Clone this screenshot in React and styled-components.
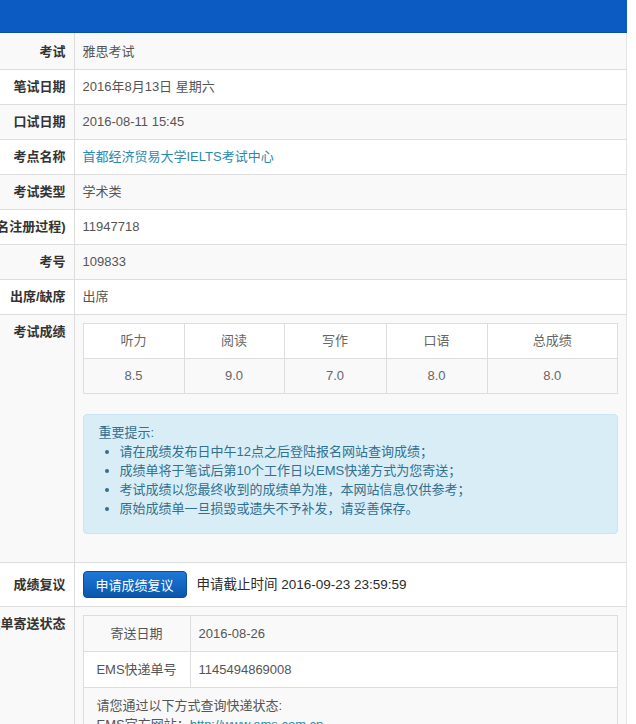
import React from "react";
import styled, { createGlobalStyle } from "styled-components";

const rows = [
	{ label: "考试", value: "雅思考试" },
	{ label: "笔试日期", value: "2016年8月13日 星期六" },
	{ label: "口试日期", value: "2016-08-11 15:45" },
	{ label: "考点名称", value: "首都经济贸易大学IELTS考试中心", link: true },
	{ label: "考试类型", value: "学术类" },
	{ label: "考生号(报名注册过程)", value: "11947718" },
	{ label: "考号", value: "109833" },
	{ label: "出席/缺席", value: "出席" }
];

const scores = [
	{ name: "听力", score: "8.5", width: 101 },
	{ name: "阅读", score: "9.0", width: 100 },
	{ name: "写作", score: "7.0", width: 102 },
	{ name: "口语", score: "8.0", width: 101 },
	{ name: "总成绩", score: "8.0" }
];

const tips = [
	"请在成绩发布日中午12点之后登陆报名网站查询成绩；",
	"成绩单将于笔试后第10个工作日以EMS快递方式为您寄送；",
	"考试成绩以您最终收到的成绩单为准，本网站信息仅供参考；",
	"原始成绩单一旦损毁或遗失不予补发，请妥善保存。"
];

const App = () => {
	return (
		<>
			<GlobalStyle />
			<Panel>
				<PanelHeading />
				<InfoTable>
					<colgroup>
						<col style={{ width: 74 }} />
						<col />
					</colgroup>
					<tbody>
						{rows.map(row => (
							<tr key={row.label}>
								<Label>
									<LabelText>{row.label}</LabelText>
								</Label>
								<Value>{row.link ? <Link href="#">{row.value}</Link> : row.value}</Value>
							</tr>
						))}
						<tr>
							<Label>
								<LabelText>考试成绩</LabelText>
							</Label>
							<Value>
								<ScoreTable>
									<colgroup>
										{scores.map(s => (
											<col key={s.name} style={s.width ? { width: s.width } : undefined} />
										))}
									</colgroup>
									<thead>
										<tr>
											{scores.map(s => (
												<ScoreHead key={s.name}>{s.name}</ScoreHead>
											))}
										</tr>
									</thead>
									<tbody>
										<ScoreRow>
											{scores.map(s => (
												<ScoreCell key={s.name}>{s.score}</ScoreCell>
											))}
										</ScoreRow>
									</tbody>
								</ScoreTable>
								<Alert>
									<AlertTitle>重要提示:</AlertTitle>
									<TipList>
										{tips.map(t => (
											<li key={t}>{t}</li>
										))}
									</TipList>
								</Alert>
							</Value>
						</tr>
						<tr>
							<Label $middle>
								<LabelText>成绩复议</LabelText>
							</Label>
							<Value>
								<ReviewLine>
									<Button type="button">申请成绩复议</Button>
									<Deadline>申请截止时间 2016-09-23 23:59:59</Deadline>
								</ReviewLine>
							</Value>
						</tr>
						<tr>
							<Label>
								<LabelText>成绩单寄送状态</LabelText>
							</Label>
							<Value>
								<ShipTable>
									<colgroup>
										<col style={{ width: 107 }} />
										<col />
									</colgroup>
									<tbody>
										<ShipRow>
											<ShipKey>寄送日期</ShipKey>
											<ShipValue>2016-08-26</ShipValue>
										</ShipRow>
										<ShipRow>
											<ShipKey>EMS快递单号</ShipKey>
											<ShipValue>1145494869008</ShipValue>
										</ShipRow>
										<ShipRow>
											<ShipNote colSpan={2}>
												请您通过以下方式查询快递状态:
												<br />
												EMS官方网站：<Link href="#">http://www.ems.com.cn</Link>
												<br />
												EMS客服电话：11183
											</ShipNote>
										</ShipRow>
									</tbody>
								</ShipTable>
							</Value>
						</tr>
					</tbody>
				</InfoTable>
			</Panel>
		</>
	);
};

export default App;

const GlobalStyle = createGlobalStyle`
	body {
		margin: 0;
		background: #ffffff;
		font-family: "Liberation Sans", "Noto Sans CJK SC", sans-serif;
		font-size: 13px;
		color: #555555;
		overflow-x: hidden;
	}
`;

const Panel = styled.div`
	width: 627px;
`;

const PanelHeading = styled.div`
	height: 33px;
	background: #0b5bc3;
	border-bottom: 1px solid #0a4fa8;
	box-sizing: border-box;
`;

const InfoTable = styled.table`
	width: 100%;
	table-layout: fixed;
	border-collapse: collapse;
	border-right: 1px solid #e4e4e4;

	& > tbody > tr:nth-child(odd) > td {
		background: #f9f9f9;
	}

	& > tbody > tr:first-child > td {
		padding-top: 10px;
	}

	& > tbody > tr + tr > td {
		border-top: 1px solid #dddddd;
	}
`;

const Label = styled.td`
	padding: 8px 8px 8px 0;
	line-height: 18px;
	vertical-align: ${p => (p.$middle ? "middle" : "top")};
	border-right: 1px solid #dddddd;
	font-weight: bold;
	color: #333333;
`;

const LabelText = styled.div`
	display: flex;
	justify-content: flex-end;
	white-space: nowrap;
`;

const Value = styled.td`
	padding: 8px;
	line-height: 18px;
	vertical-align: top;
`;

const Link = styled.a`
	color: #2d88ad;
	text-decoration: none;
`;

const ScoreTable = styled.table`
	width: 100%;
	table-layout: fixed;
	border-collapse: collapse;
	margin-bottom: 20px;
	background: #ffffff;
	border: 1px solid #dddddd;
`;

const ScoreHead = styled.th`
	height: 34px;
	font-weight: normal;
	color: #666666;
	text-align: center;
	border: 1px solid #dddddd;
	padding: 0 8px;
`;

const ScoreRow = styled.tr`
	background: #f9f9f9;
`;

const ScoreCell = styled.td`
	height: 34px;
	color: #666666;
	text-align: center;
	border: 1px solid #dddddd;
	padding: 0 8px;
`;

const Alert = styled.div`
	margin-bottom: 20px;
	padding: 8px 15px 15px;
	background: #d9edf7;
	border: 1px solid #c8e5f2;
	border-radius: 4px;
	color: #31708f;
	line-height: 19px;
`;

const AlertTitle = styled.div``;

const TipList = styled.ul`
	margin: 0;
	padding-left: 21px;
`;

const ReviewLine = styled.div`
	display: flex;
	align-items: center;
	gap: 10px;
`;

const Button = styled.button`
	height: 27px;
	padding: 0 12px;
	border: 1px solid #0a4f9f;
	border-radius: 4px;
	background: linear-gradient(#1e78d8, #0a56ac);
	color: #ffffff;
	font-family: inherit;
	font-size: 13px;
	cursor: pointer;
`;

const Deadline = styled.span`
	color: #2b2b2b;
	font-size: 13.5px;
`;

const ShipTable = styled.table`
	width: 100%;
	table-layout: fixed;
	border-collapse: collapse;
	border: 1px solid #dddddd;
	background: #ffffff;
`;

const ShipRow = styled.tr`
	&:nth-child(odd) {
		background: #f9f9f9;
	}
`;

const ShipKey = styled.td`
	height: 35px;
	padding: 0 8px;
	text-align: center;
	border: 1px solid #dddddd;
`;

const ShipValue = styled.td`
	height: 35px;
	padding: 0 8px;
	border: 1px solid #dddddd;
`;

const ShipNote = styled.td`
	padding: 8px 13px;
	line-height: 19px;
	border: 1px solid #dddddd;
`;
